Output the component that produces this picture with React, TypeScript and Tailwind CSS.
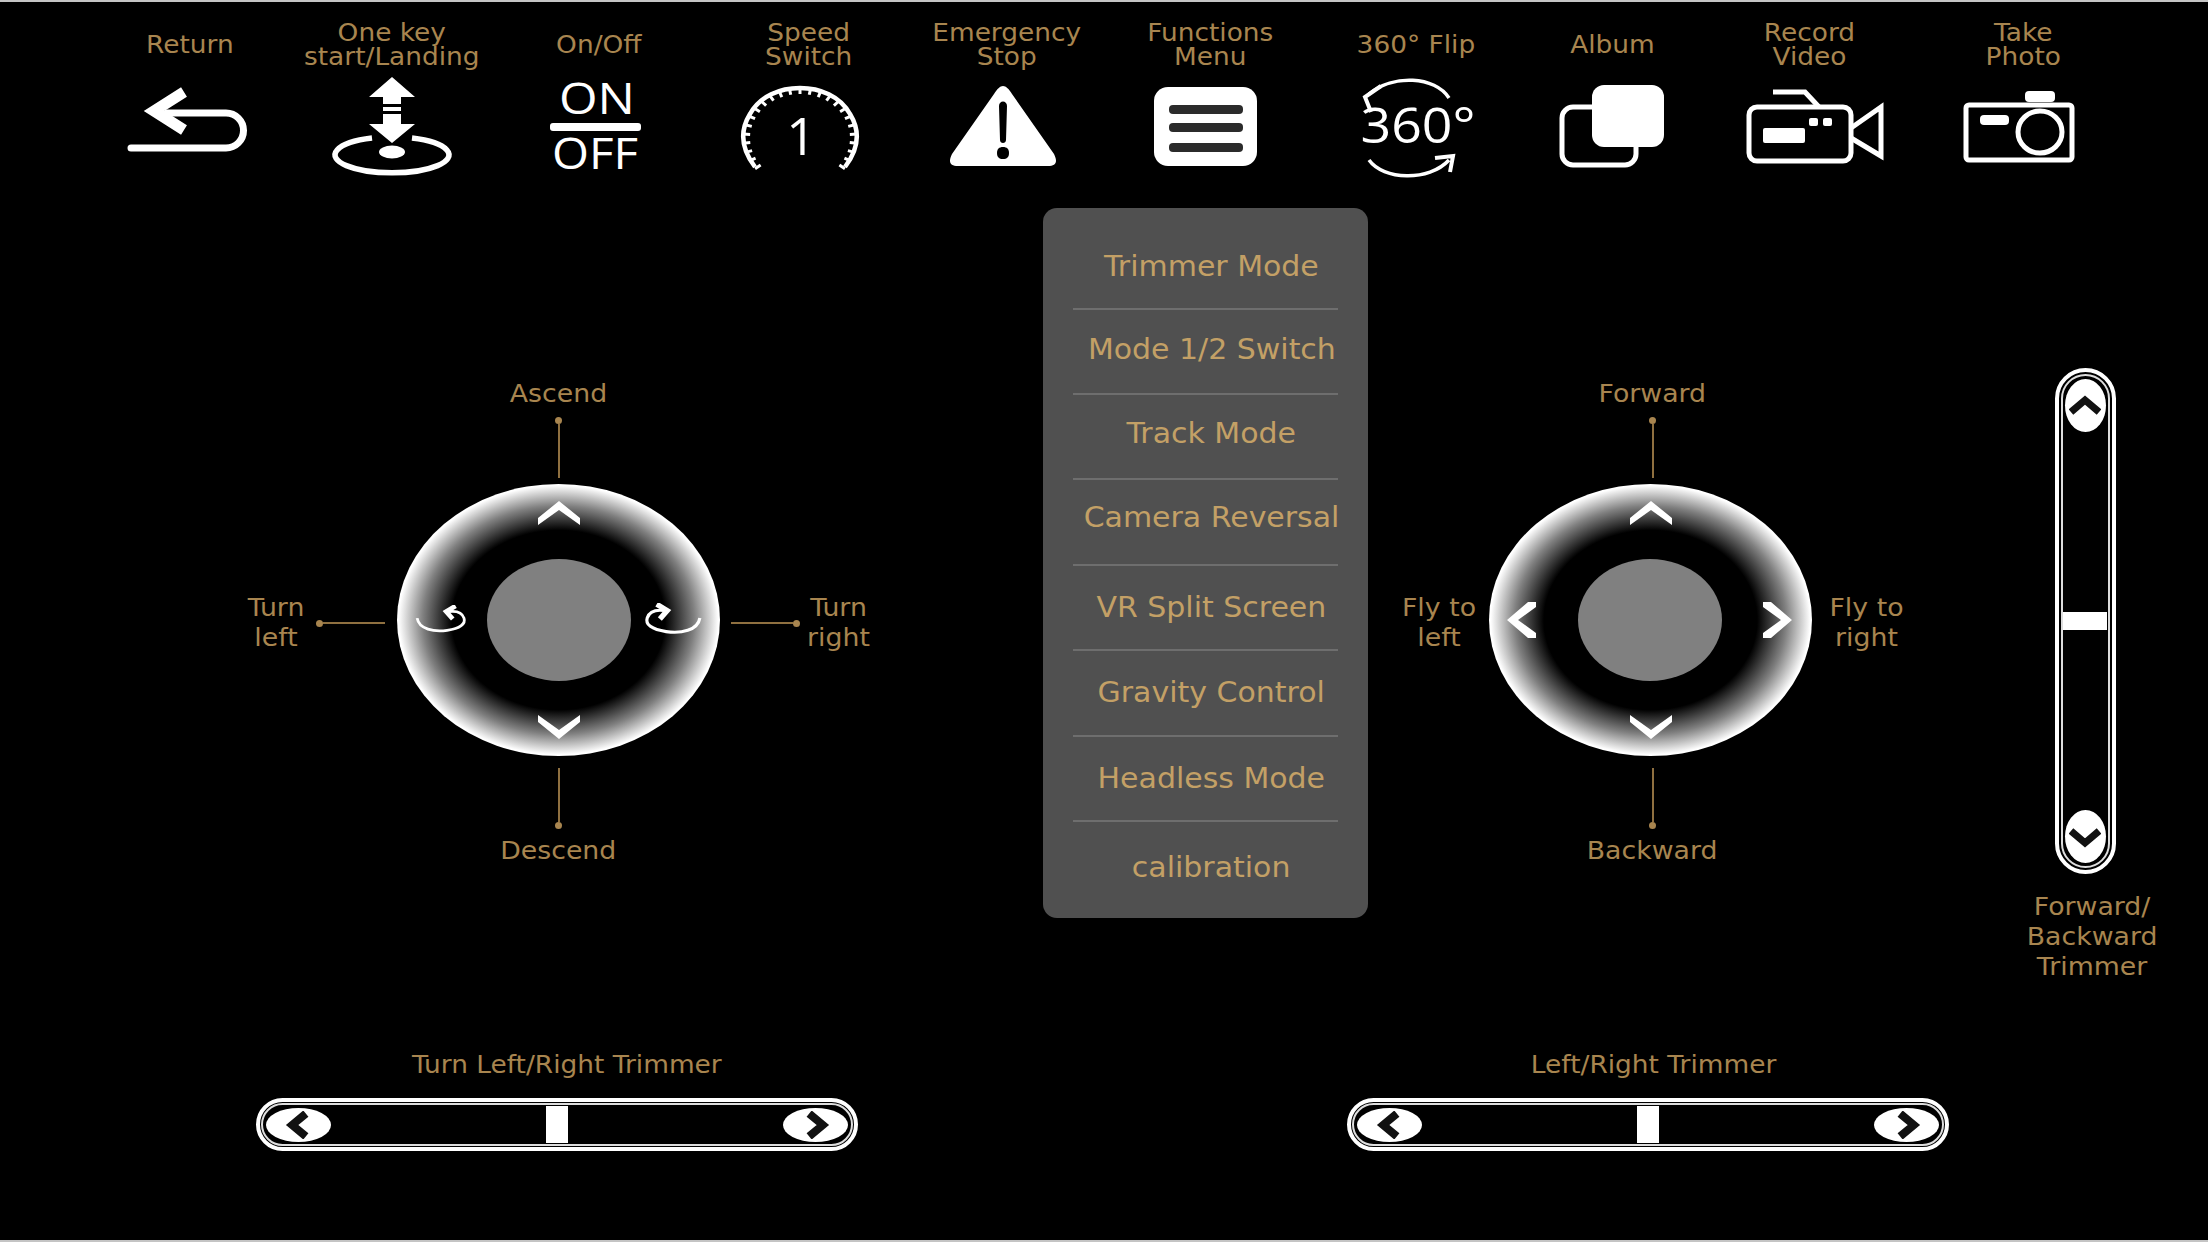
import React from 'react';

type TopItem = { lines: string[]; labelClass: string; icon: React.ReactNode };

const stroke = { stroke: '#fff', fill: 'none' } as const;

function ReturnIcon() {
  return (
    <>
      <path d="M12 70 H107 a17.5 17.5 0 0 0 0 -35 H48" {...stroke} strokeWidth={7} strokeLinecap="round" />
      <path d="M65 14 L35 33 L65 52" {...stroke} strokeWidth={11} strokeLinejoin="miter" />
    </>
  );
}

function LandingIcon() {
  return (
    <>
      <path d="M70 -1 L93 19 H79 V26 H61 V19 H47 Z" fill="#fff" />
      <rect x="61" y="29" width="18" height="4" fill="#fff" />
      <rect x="61" y="36" width="18" height="9" fill="#fff" />
      <path d="M61 45 H79 V46 H93 L70 65 L47 46 H61 Z" fill="#fff" />
      <path d="M50 60 A57 18 0 1 0 90 60" {...stroke} strokeWidth={5.5} />
      <ellipse cx="70" cy="74" rx="13" ry="6.5" fill="#fff" />
    </>
  );
}

function OnOffIcon() {
  return (
    <>
      <text x="72" y="36" textAnchor="middle" fill="#fff" fontFamily="'Open Sans', sans-serif" fontSize="44" textLength="76" lengthAdjust="spacingAndGlyphs">ON</text>
      <rect x="25" y="45" width="91" height="8" rx="3" fill="#fff" />
      <text x="70" y="91" textAnchor="middle" fill="#fff" fontFamily="'Open Sans', sans-serif" fontSize="44" textLength="86" lengthAdjust="spacingAndGlyphs">OFF</text>
    </>
  );
}

function SpeedIcon() {
  const ticks = [];
  for (let i = 0; i <= 24; i++) {
    const a = ((-128 + (i * 256) / 24) * Math.PI) / 180;
    const rx = 57;
    const ry = 50;
    const x1 = 72 + Math.sin(a) * rx;
    const y1 = 60 - Math.cos(a) * ry;
    const x2 = 72 + Math.sin(a) * (rx - 7);
    const y2 = 60 - Math.cos(a) * (ry - 6);
    ticks.push(<line key={i} x1={x1} y1={y1} x2={x2} y2={y2} stroke="#fff" strokeWidth={3} />);
  }
  return (
    <>
      <path d="M27 89 C14 72 11 54 22 36 C32 18 52 10 72 10 C92 10 112 18 122 36 C133 54 130 72 117 89" {...stroke} strokeWidth={4.5} />
      {ticks}
      <text x="73" y="77" textAnchor="middle" fill="#fff" fontFamily="'Open Sans', sans-serif" fontSize="52">1</text>
    </>
  );
}

function WarningIcon() {
  return (
    <g transform="translate(3 0)">
      <path fillRule="evenodd" fill="#fff" d="M69 8 C72 8 75 11 78 16 L120 76 C124 84 122 88 114 88 H24 C16 88 14 84 18 76 L60 16 C63 11 66 8 69 8 Z M65 28 L66 62 C66 66 72 66 72 62 L73 28 C73 22 65 22 65 28 Z M69 69 C65 69 63 71 63 75 C63 79 65 81 69 81 C73 81 75 79 75 75 C75 71 73 69 69 69 Z" />
    </g>
  );
}

function MenuIcon() {
  return (
    <>
      <rect x="20" y="9" width="103" height="79" rx="14" fill="#fff" />
      <rect x="35" y="27" width="74" height="9" rx="4" fill="#2b2b2b" />
      <rect x="35" y="45" width="74" height="9" rx="4" fill="#2b2b2b" />
      <rect x="35" y="65" width="74" height="9" rx="4" fill="#2b2b2b" />
    </>
  );
}

function FlipIcon() {
  return (
    <>
      <path d="M112 20 C98 -2 56 -4 32 16" {...stroke} strokeWidth={3.5} />
      <path d="M44 8 L28 19 L34 34" {...stroke} strokeWidth={4} />
      <text x="81" y="65" textAnchor="middle" fill="#fff" fontFamily="'Open Sans', sans-serif" fontSize="50" textLength="115" lengthAdjust="spacingAndGlyphs">360°</text>
      <path d="M32 82 C46 102 92 104 112 82" {...stroke} strokeWidth={3.5} />
      <path d="M98 80 L116 78 L113 94" {...stroke} strokeWidth={4} />
    </>
  );
}

function AlbumIcon() {
  return (
    <>
      <rect x="22" y="29" width="74" height="58" rx="11" {...stroke} strokeWidth={5} />
      <rect x="52" y="7" width="72" height="62" rx="12" fill="#fff" />
    </>
  );
}

function VideoIcon() {
  return (
    <>
      <rect x="6" y="29" width="102" height="54" rx="8" {...stroke} strokeWidth={5} />
      <path d="M30 14 H62 L76 29" {...stroke} strokeWidth={5} />
      <path d="M108 50 L138 29 V78 L108 60" {...stroke} strokeWidth={5} />
      <rect x="20" y="50" width="42" height="15" rx="2" fill="#fff" />
      <rect x="66" y="40" width="9" height="8" rx="2" fill="#fff" />
      <rect x="80" y="40" width="9" height="8" rx="2" fill="#fff" />
    </>
  );
}

function CameraIcon() {
  return (
    <>
      <rect x="79" y="13" width="30" height="11" rx="4" fill="#fff" />
      <rect x="20" y="27" width="106" height="55" rx="3" {...stroke} strokeWidth={5} />
      <rect x="34" y="37" width="29" height="10" rx="4" fill="#fff" />
      <ellipse cx="94" cy="54" rx="22" ry="21" fill="#000" stroke="#fff" strokeWidth={5} />
    </>
  );
}

const topItems: TopItem[] = [
  { lines: ['Return'], labelClass: 'ml-[2px]', icon: <ReturnIcon /> },
  { lines: ['One key', 'start/Landing'], labelClass: 'ml-0', icon: <LandingIcon /> },
  { lines: ['On/Off'], labelClass: 'ml-[8px]', icon: <OnOffIcon /> },
  { lines: ['Speed', 'Switch'], labelClass: 'ml-[22px]', icon: <SpeedIcon /> },
  { lines: ['Emergency', 'Stop'], labelClass: 'ml-[12px]', icon: <WarningIcon /> },
  { lines: ['Functions', 'Menu'], labelClass: 'ml-[14px]', icon: <MenuIcon /> },
  { lines: ['360° Flip'], labelClass: 'ml-[18px]', icon: <FlipIcon /> },
  { lines: ['Album'], labelClass: 'ml-[6px]', icon: <AlbumIcon /> },
  { lines: ['Record', 'Video'], labelClass: '-ml-[6px]', icon: <VideoIcon /> },
  { lines: ['Take', 'Photo'], labelClass: 'ml-[16px]', icon: <CameraIcon /> },
];

const menuRows = [
  { label: 'Trimmer Mode', rowClass: 'h-[102px] pt-[18px]' },
  { label: 'Mode 1/2 Switch', rowClass: 'h-[85px] pb-[3px]' },
  { label: 'Track Mode', rowClass: 'h-[85px] pb-[6px]' },
  { label: 'Camera Reversal', rowClass: 'h-[86px] pb-[8px]' },
  { label: 'VR Split Screen', rowClass: 'h-[85px]' },
  { label: 'Gravity Control', rowClass: 'h-[86px]' },
  { label: 'Headless Mode', rowClass: 'h-[85px]' },
  { label: 'calibration', rowClass: 'h-[96px] pb-[4px]' },
];

function Chevron({ dir, className }: { dir: 'up' | 'down' | 'left' | 'right'; className: string }) {
  const pts = {
    up: '0,24 0,17 21,0 42,17 42,24 21,9',
    down: '0,0 0,7 21,24 42,7 42,0 21,15',
    left: '29,0 21,0 0,18 21,36 29,36 29,31 11,18 29,5',
    right: '0,0 8,0 29,18 8,36 0,36 0,31 18,18 0,5',
  }[dir];
  const vb = dir === 'up' || dir === 'down' ? '0 0 42 24' : '0 0 29 36';
  return (
    <svg viewBox={vb} className={`absolute ${className}`}>
      <polygon points={pts} fill="#fff" />
    </svg>
  );
}

function TurnArrow({ flip, className }: { flip?: boolean; className: string }) {
  return (
    <svg viewBox="0 0 56 32" className={`absolute ${className} ${flip ? '-scale-x-100' : ''}`}>
      <path d="M2 14 C4 26 20 29 34 27 C48 25 54 20 52 14 C50 8 44 6 36 7" fill="none" stroke="#fff" strokeWidth={3} />
      <path d="M43 1 L33 7 L40 15" fill="none" stroke="#fff" strokeWidth={5} />
    </svg>
  );
}

function VLead({ flip }: { flip?: boolean }) {
  return (
    <div className={`flex items-center ${flip ? 'flex-col-reverse' : 'flex-col'}`}>
      <span className="h-[7px] w-[7px] rounded-full bg-[#a8854f]" />
      <span className="h-[54px] w-[2px] bg-[#8f7040]" />
    </div>
  );
}

function HLead({ flip }: { flip?: boolean }) {
  return (
    <div className={`flex items-center ${flip ? 'flex-row-reverse' : 'flex-row'}`}>
      <span className="h-[7px] w-[7px] rounded-full bg-[#a8854f]" />
      <span className="h-[2px] w-[62px] bg-[#8f7040]" />
    </div>
  );
}

function Label({ children, className = '' }: { children: React.ReactNode; className?: string }) {
  return <div className={`scale-x-[1.07] text-center text-[25px] leading-[30px] text-[#a8854f] ${className}`}>{children}</div>;
}

function Pad({ turn }: { turn?: boolean }) {
  return (
    <div className="relative flex h-[272px] w-[323px] items-center justify-center rounded-[50%] bg-[radial-gradient(closest-side,#000_66%,#808080_84%,#fff_99%)]">
      <div className="h-[122px] w-[144px] rounded-[50%] bg-[#808080]" />
      <Chevron dir="up" className="left-[141px] top-[17px] h-[24px] w-[42px]" />
      <Chevron dir="down" className="left-[141px] top-[231px] h-[24px] w-[42px]" />
      {turn ? (
        <>
          <TurnArrow className="left-[18px] top-[121px] h-[30px] w-[53px]" />
          <TurnArrow flip className="left-[246px] top-[119px] h-[34px] w-[59px]" />
        </>
      ) : (
        <>
          <Chevron dir="left" className="left-[18px] top-[118px] h-[36px] w-[29px]" />
          <Chevron dir="right" className="left-[274px] top-[118px] h-[36px] w-[29px]" />
        </>
      )}
    </div>
  );
}

function LeftStick() {
  return (
    <div className="grid grid-cols-[152px_323px_151px] grid-rows-[auto_272px_auto]">
      <div className="col-start-2 flex flex-col items-center gap-[8px] pb-[6px]">
        <Label>Ascend</Label>
        <VLead />
      </div>
      <div className="col-start-1 row-start-2 mt-[6px] flex items-center justify-end pr-[12px]">
        <Label className="mr-[10px] w-[60px]">Turn<br />left</Label>
        <HLead />
      </div>
      <div className="col-start-2 row-start-2"><Pad turn /></div>
      <div className="col-start-3 row-start-2 mt-[6px] flex items-center pl-[11px]">
        <HLead flip />
        <Label className="ml-[6px] w-[70px]">Turn<br />right</Label>
      </div>
      <div className="col-start-2 row-start-3 flex flex-col items-center gap-[7px] pt-[12px]">
        <VLead flip />
        <Label>Descend</Label>
      </div>
    </div>
  );
}

function RightStick() {
  return (
    <div className="grid grid-cols-[90px_323px_90px] grid-rows-[auto_272px_auto]">
      <div className="col-start-2 flex flex-col items-center gap-[8px] pb-[6px] pl-[5px]">
        <Label>Forward</Label>
        <VLead />
      </div>
      <div className="col-start-1 row-start-2 mt-[6px] flex items-center justify-end pr-[15px]">
        <Label className="w-[70px]">Fly to<br />left</Label>
      </div>
      <div className="col-start-2 row-start-2"><Pad /></div>
      <div className="col-start-3 row-start-2 mt-[6px] flex items-center pl-[19px]">
        <Label className="w-[71px]">Fly to<br />right</Label>
      </div>
      <div className="col-start-2 row-start-3 flex flex-col items-center gap-[7px] pt-[12px] pl-[5px]">
        <VLead flip />
        <Label>Backward</Label>
      </div>
    </div>
  );
}

function KnobArrow({ dir }: { dir: 'left' | 'right' | 'up' | 'down' }) {
  const d = {
    left: 'M20 2 L8 12 L20 22',
    right: 'M8 2 L20 12 L8 22',
    up: 'M2 19 L16 7 L30 19',
    down: 'M2 7 L16 19 L30 7',
  }[dir];
  const vb = dir === 'left' || dir === 'right' ? '0 0 28 24' : '0 0 32 26';
  const size = dir === 'left' || dir === 'right' ? 'h-[28px] w-[32px]' : 'h-[26px] w-[32px]';
  return (
    <svg viewBox={vb} className={size}>
      <path d={d} fill="none" stroke="#111" strokeWidth={7} />
    </svg>
  );
}

function HTrim() {
  return (
    <div className="h-[53px] w-[602px] rounded-full border-[4px] border-white p-[1px]">
      <div className="flex h-full items-center justify-between rounded-full border-[2px] border-[#ddd] px-[3px]">
        <div className="flex h-[34px] w-[65px] items-center justify-center rounded-[50%] bg-white"><KnobArrow dir="left" /></div>
        <div className="h-[37px] w-[22px] bg-white" />
        <div className="flex h-[34px] w-[65px] items-center justify-center rounded-[50%] bg-white"><KnobArrow dir="right" /></div>
      </div>
    </div>
  );
}

function VTrim() {
  return (
    <div className="h-[506px] w-[61px] rounded-full border-[4px] border-white p-[2px]">
      <div className="flex h-full flex-col items-center justify-between rounded-full border-[2px] border-[#ddd] py-[3px]">
        <div className="flex h-[53px] w-[41px] items-center justify-center rounded-[50%] bg-white"><KnobArrow dir="up" /></div>
        <div className="h-[18px] w-[44px] bg-white" />
        <div className="flex h-[53px] w-[41px] items-center justify-center rounded-[50%] bg-white"><KnobArrow dir="down" /></div>
      </div>
    </div>
  );
}

const trimmers = [
  { label: 'Turn Left/Right Trimmer', labelClass: 'ml-[20px]' },
  { label: 'Left/Right Trimmer', labelClass: 'ml-[12px]' },
];

export default function App() {
  return (
    <div className="flex h-[1242px] w-[2208px] flex-col overflow-hidden border-y-[2px] border-[#c4c4c4] bg-black font-['DejaVu_Sans',sans-serif]">
      <div className="flex h-[206px] pl-[87px] pt-[19px]">
        {topItems.map((item) => (
          <div key={item.lines[0]} className="flex w-[203px] flex-col items-center">
            <div className={`flex h-[48px] scale-x-[1.1] flex-col justify-center text-center text-[24px] leading-[24px] text-[#a8854f] ${item.labelClass}`}>
              {item.lines.map((l) => <div key={l} className="whitespace-nowrap">{l}</div>)}
            </div>
            <svg viewBox="0 0 140 100" className="mt-[9px] h-[100px] w-[140px] overflow-visible">{item.icon}</svg>
          </div>
        ))}
      </div>

      <div className="flex h-[842px] items-start">
        <div className="flex w-[1043px] justify-center pl-[73px] pt-[171px]"><LeftStick /></div>
        <div className="flex h-[710px] w-[325px] flex-col items-center rounded-[14px] bg-[#505050]">
          {menuRows.map((row, i) => (
            <div key={row.label} className={`flex w-[265px] items-center justify-center pl-[12px] ${row.rowClass} ${i < menuRows.length - 1 ? 'border-b-[2px] border-[#6e6e6e]' : ''}`}>
              <span className="scale-x-[1.07] whitespace-nowrap text-[28px] text-[#c3a066]">{row.label}</span>
            </div>
          ))}
        </div>
        <div className="flex w-[562px] justify-center pl-[2px] pt-[171px]"><RightStick /></div>
        <div className="flex flex-col items-center pl-[87px] pt-[160px]">
          <VTrim />
          <Label className="ml-[14px] mt-[18px]">Forward/<br />Backward<br />Trimmer</Label>
        </div>
      </div>

      <div className="flex gap-[489px] pl-[256px]">
        {trimmers.map((t) => (
          <div key={t.label} className="flex flex-col items-center gap-[18px]">
            <div className={`scale-x-[1.1] text-[24px] leading-[30px] text-[#a8854f] ${t.labelClass}`}>{t.label}</div>
            <HTrim />
          </div>
        ))}
      </div>
    </div>
  );
}
